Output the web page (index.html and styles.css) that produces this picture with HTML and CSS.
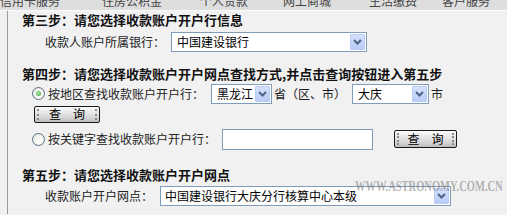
FILE: index.html
```html
<!DOCTYPE html>
<html lang="zh-CN">
<head>
<meta charset="utf-8">
<link rel="stylesheet" href="styles.css">
</head>
<body>
<div class="nav">
  <span class="n1">信用卡服务</span>
  <span class="n2">住房公积金</span>
  <span class="n3">个人贷款</span>
  <span class="n4">网上商城</span>
  <span class="n5">生活缴费</span>
  <span class="n6">客户服务</span>
</div>
<div class="main">
  <div class="step">第三步：请您选择收款账户开户行信息</div>
  <div class="row r1">
    <span class="label">收款人账户所属银行：</span>
    <div class="select s-bank"><span class="val">中国建设银行</span><span class="arrow"><svg width="9" height="6" viewBox="0 0 9 6"><path d="M1 1 L4.5 4.5 L8 1" fill="none" stroke="#4d6185" stroke-width="2"/></svg></span></div>
  </div>

  <div class="step s2">第四步：请您选择收款账户开户网点查找方式,并点击查询按钮进入第五步</div>
  <div class="row r2">
    <span class="radio on"></span>
    <span class="label">按地区查找收款账户开户行：</span>
    <div class="select s-prov"><span class="val">黑龙江</span><span class="arrow"><svg width="9" height="6" viewBox="0 0 9 6"><path d="M1 1 L4.5 4.5 L8 1" fill="none" stroke="#4d6185" stroke-width="2"/></svg></span></div>
    <span class="label">省（区、市）</span>
    <div class="select s-city"><span class="val">大庆</span><span class="arrow"><svg width="9" height="6" viewBox="0 0 9 6"><path d="M1 1 L4.5 4.5 L8 1" fill="none" stroke="#4d6185" stroke-width="2"/></svg></span></div>
    <span class="label">市</span>
  </div>
  <div class="row r3">
    <span class="btn">查　询</span>
  </div>
  <div class="row r4">
    <span class="radio"></span>
    <span class="label">按关键字查找收款账户开户行：</span>
    <span class="input"></span>
    <span class="btn b2">查　询</span>
  </div>

  <div class="step s3">第五步：请您选择收款账户开户网点</div>
  <div class="row r5">
    <span class="label">收款账户开户网点：</span>
    <div class="select s-branch"><span class="val">中国建设银行大庆分行核算中心本级</span><span class="arrow"><svg width="9" height="6" viewBox="0 0 9 6"><path d="M1 1 L4.5 4.5 L8 1" fill="none" stroke="#4d6185" stroke-width="2"/></svg></span></div>
  </div>
</div>
<div class="watermark">WWW.ASTRONOMY.COM.CN</div>
</body>
</html>
```
FILE: styles.css
```css
html, body {
  margin: 0;
  padding: 0;
}
body {
  width: 507px;
  height: 215px;
  overflow: hidden;
  background: #f1f1f1;
  font-family: "Noto Sans CJK SC", "Noto Sans", sans-serif;
  font-size: 12px;
  color: #000;
  position: relative;
}
.nav {
  height: 10px;
  background: #dedede;
  border-bottom: 1px solid #fafafa;
  position: relative;
  overflow: hidden;
  display: flex;
  color: #444;
  font-size: 12px;
  line-height: 12px;
}
.nav span {
  margin-top: -5px;
  white-space: nowrap;
}
.n1 { margin-left: 0; }
.n2 { margin-left: 42px; }
.n3 { margin-left: 38px; }
.n4 { margin-left: 35px; }
.n5 { margin-left: 38px; }
.n6 { margin-left: 25px; }

.main {
  margin-left: 7px;
  border-left: 1px solid #9a9a9a;
  padding-left: 14px;
  padding-top: 1px;
  height: 203px;
  box-sizing: border-box;
}
.step {
  font-weight: bold;
  font-size: 13px;
  line-height: 16px;
  height: 16px;
  white-space: nowrap;
  color: #111;
}
.s2 { margin-top: 14px; }
.s3 { margin-top: 17px; }
.row {
  display: flex;
  align-items: center;
  white-space: nowrap;
  line-height: 14px;
}
.r1 { margin-top: 4px; padding-left: 23px; height: 20px; }
.r1 .label { margin-right: 6px; }
.r2 { margin-top: 1px; padding-left: 10px; height: 21px; }
.r3 { margin-top: 1px; padding-left: 12px; height: 18px; }
.r4 { margin-top: 5px; padding-left: 10px; height: 22px; }
.r5 { margin-top: 2px; padding-left: 23px; height: 21px; }
.r5 .label { margin-right: 7px; }

.label { color: #222; }

.select {
  display: flex;
  align-items: center;
  height: 20px;
  box-sizing: border-box;
  border: 1px solid #7f9db9;
  background: #fff;
  padding: 1px;
}
.select .val {
  flex: 1;
  padding-left: 4px;
  line-height: 16px;
  overflow: hidden;
}
.select .arrow {
  width: 15px;
  height: 16px;
  box-sizing: border-box;
  border: 1px solid #b9cbf2;
  border-radius: 1px;
  background: linear-gradient(#d5e1fd, #b8ccf7);
  display: flex;
  align-items: center;
  justify-content: center;
}
.s-bank { width: 196px; }
.s-prov { width: 61px; margin-left: 7px; margin-right: 2px; }
.s-city { width: 77px; margin-left: 6px; margin-right: 2px; }
.s-branch { width: 291px; }
.s-branch .val { padding-left: 3px; }

.radio {
  width: 13px;
  height: 13px;
  box-sizing: border-box;
  border-radius: 50%;
  border: 1px solid #5b6f87;
  background: radial-gradient(circle at 60% 65%, #ffffff, #e4e4dc);
  margin-right: 3px;
  position: relative;
}
.radio.on::after {
  content: "";
  position: absolute;
  left: 3px;
  top: 3px;
  width: 5px;
  height: 5px;
  border-radius: 50%;
  background: radial-gradient(circle at 40% 40%, #a8eaa0, #3fa23a);
}

.btn {
  position: relative;
  display: inline-flex;
  align-items: center;
  justify-content: center;
  width: 66px;
  height: 17px;
  box-sizing: border-box;
  border: 1px solid #1a1a1a;
  border-radius: 2px;
  background: linear-gradient(#fbfbfb 0%, #e6e6e6 40%, #cfcfcf 80%, #b9b9b9 100%);
  font-size: 12px;
  line-height: 14px;
  color: #000;
}
.btn::before, .btn::after {
  content: "";
  position: absolute;
  top: 2px;
  bottom: 2px;
  width: 0;
  border-left: 2px dotted #8a8a8a;
}
.btn::before { left: 2px; }
.btn::after { right: 2px; }
.b2 { width: 63px; height: 18px; margin-left: 21px; }

.input {
  width: 151px;
  height: 21px;
  box-sizing: border-box;
  border: 1px solid #7f9db9;
  background: #fff;
  margin-left: 6px;
}

.watermark {
  position: absolute;
  left: 355px;
  top: 180px;
  font-family: "Liberation Serif", serif;
  font-weight: bold;
  font-size: 14px;
  line-height: 14px;
  color: rgba(120, 120, 120, 0.55);
  transform: scaleX(0.75);
  transform-origin: left top;
  white-space: nowrap;
}
```
